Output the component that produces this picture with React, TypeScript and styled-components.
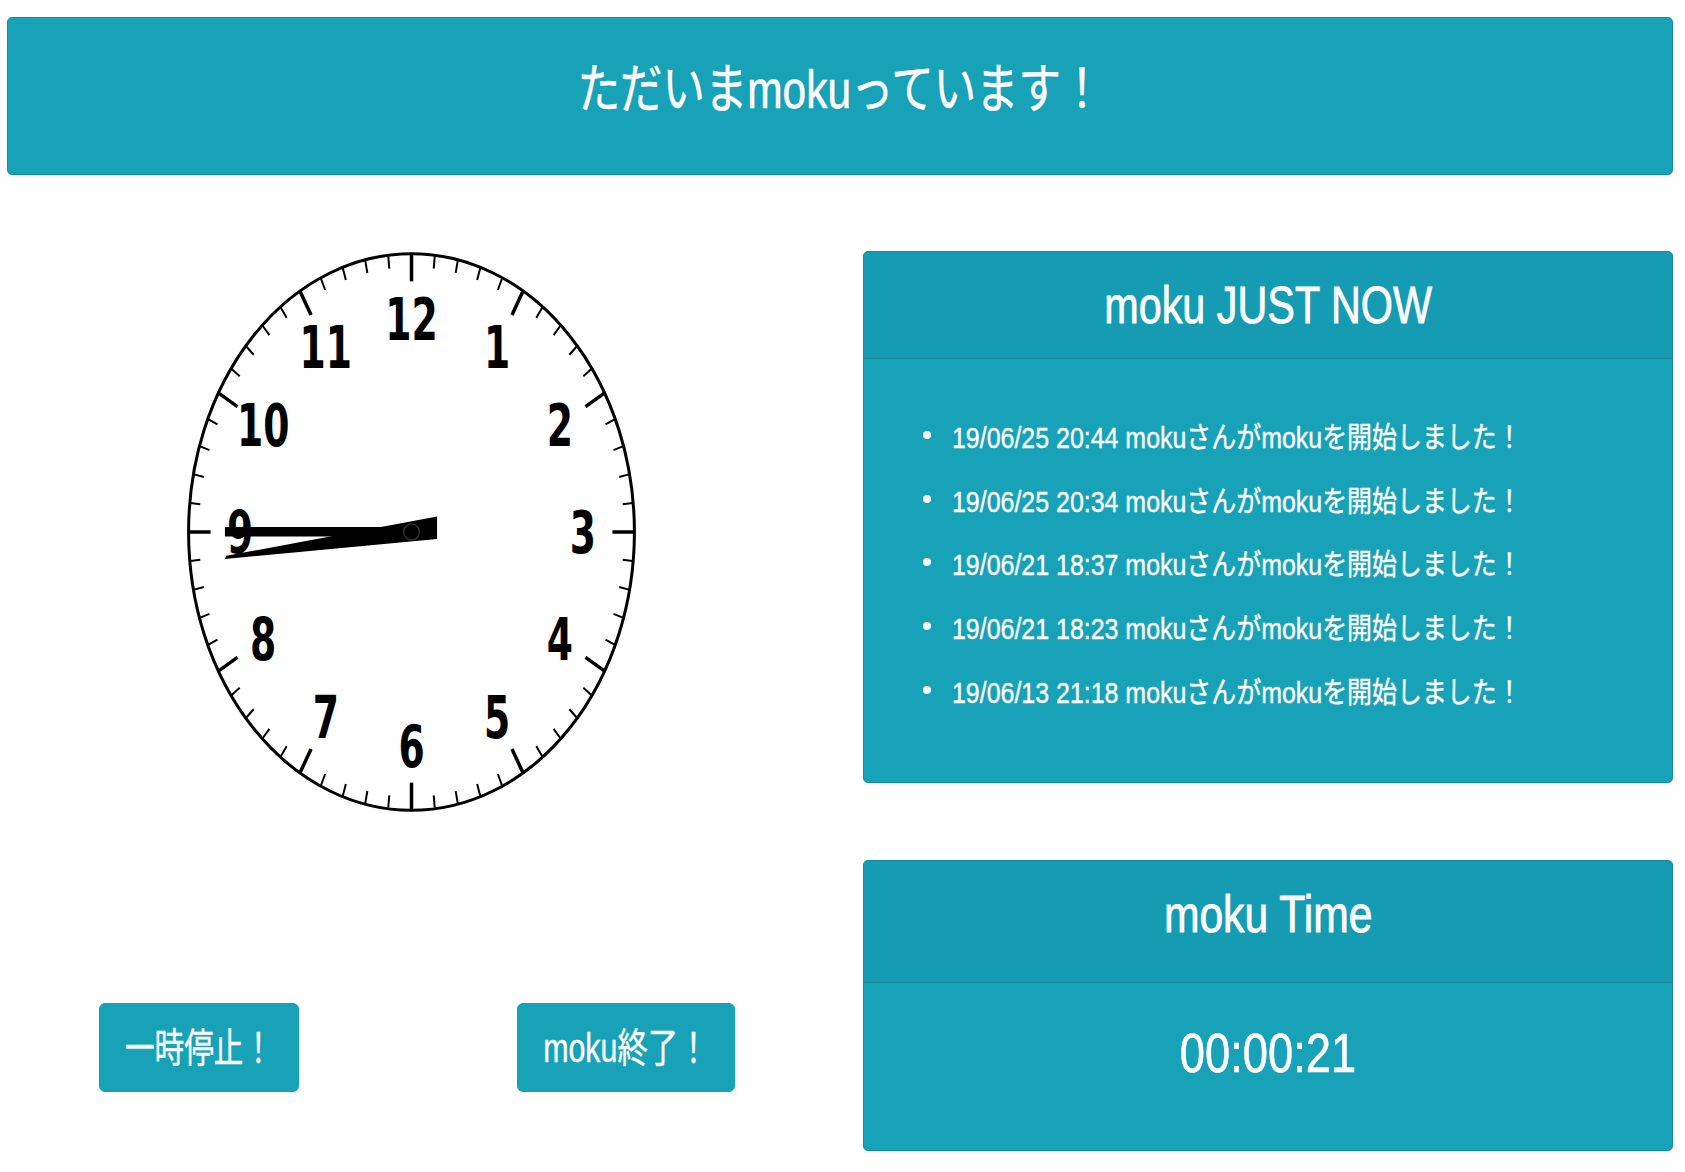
import React from "react";
import styled, { createGlobalStyle } from "styled-components";

const TEAL = "#17a2b8";
const EDGE = "#148c9f";

const GlobalStyle = createGlobalStyle`
  html, body { margin: 0; padding: 0; background: #ffffff; }
  body { font-family: "Liberation Sans", "Noto Sans CJK JP", sans-serif; }
`;

const Page = styled.div`
  box-sizing: border-box;
  width: 1685px;
  padding: 17px 12px 20px 7px;
`;

const TopBar = styled.header`
  box-sizing: border-box;
  height: 158px;
  background: ${TEAL};
  border: 1px solid ${EDGE};
  border-radius: 5px;
  display: flex;
  align-items: center;
  justify-content: center;
  padding-bottom: 14px;
`;

const Squish = styled.span<{ $sx: number; $origin?: string; $weight?: number }>`
  display: inline-block;
  white-space: nowrap;
  transform: scaleX(${(p) => p.$sx});
  transform-origin: ${(p) => p.$origin ?? "center"};
  -webkit-text-stroke: ${(p) => p.$weight ?? 0}px currentColor;
`;

const PageTitle = styled.h1`
  margin: 0;
  color: #ffffff;
  font-weight: 400;
  font-size: 53px;
  line-height: 1;
`;

const Main = styled.main`
  display: grid;
  grid-template-columns: 809px 810px;
  column-gap: 47px;
  margin-top: 76px;
`;

const LeftColumn = styled.section`
  display: flex;
  flex-direction: column;
`;

const ClockFace = styled.svg`
  display: block;
  width: 449px;
  height: 560px;
  margin: 1px 0 0 180px;
`;

const ButtonRow = styled.div`
  display: flex;
  gap: 218px;
  margin-top: 191px;
  padding-left: 92px;
`;

const ActionButton = styled.button<{ $w: number }>`
  box-sizing: border-box;
  width: ${(p) => p.$w}px;
  height: 89px;
  border: 1px solid ${TEAL};
  border-radius: 6px;
  background: ${TEAL};
  color: #ffffff;
  font-family: "Liberation Sans", "Noto Sans CJK JP", sans-serif;
  font-size: 40px;
  line-height: 1;
  padding: 0;
  display: flex;
  align-items: center;
  justify-content: center;
  cursor: pointer;
`;

const RightColumn = styled.section`
  display: flex;
  flex-direction: column;
  gap: 77px;
`;

const Card = styled.div<{ $h: number }>`
  box-sizing: border-box;
  height: ${(p) => p.$h}px;
  background: ${TEAL};
  border: 1px solid ${EDGE};
  border-radius: 5px;
  overflow: hidden;
  display: flex;
  flex-direction: column;
  color: #ffffff;
`;

const CardHeader = styled.div<{ $h: number; $shift: number }>`
  box-sizing: border-box;
  height: ${(p) => p.$h + 1}px;
  flex: none;
  background: rgba(0, 0, 0, 0.03);
  border-bottom: 1px solid rgba(0, 0, 0, 0.125);
  display: flex;
  align-items: center;
  justify-content: center;
  padding-bottom: ${(p) => p.$shift}px;
`;

const CardTitle = styled.h2`
  margin: 0;
  font-weight: 400;
  font-size: 52px;
  line-height: 1;
`;

const FeedList = styled.ul`
  list-style: none;
  margin: 0;
  padding: 44px 0 0 59px;
`;

const FeedItem = styled.li`
  display: flex;
  align-items: center;
  height: 63.75px;
  font-size: 29px;
`;

const Bullet = styled.span`
  flex: none;
  width: 8px;
  height: 8px;
  border-radius: 50%;
  background: #ffffff;
  margin-right: 21px;
`;

const TimerBody = styled.div`
  flex: 1;
  display: flex;
  align-items: center;
  justify-content: center;
  padding-bottom: 28px;
`;

const TimerText = styled.div`
  font-size: 56px;
  line-height: 1;
`;

const feed = [
  "19/06/25 20:44 mokuさんがmokuを開始しました！",
  "19/06/25 20:34 mokuさんがmokuを開始しました！",
  "19/06/21 18:37 mokuさんがmokuを開始しました！",
  "19/06/21 18:23 mokuさんがmokuを開始しました！",
  "19/06/13 21:18 mokuさんがmokuを開始しました！",
];

function Clock() {
  const ticks = Array.from({ length: 60 }, (_, i) => {
    const a = (i * 6 * Math.PI) / 180;
    const major = i % 5 === 0;
    const r1 = 99;
    const r2 = major ? 89.5 : 94.6;
    return (
      <line
        key={i}
        x1={100 + r1 * Math.sin(a)}
        y1={100 - r1 * Math.cos(a)}
        x2={100 + r2 * Math.sin(a)}
        y2={100 - r2 * Math.cos(a)}
        stroke="#000"
        strokeWidth={major ? 3.5 : 2}
        vectorEffect="non-scaling-stroke"
      />
    );
  });
  const numbers = Array.from({ length: 12 }, (_, i) => {
    const n = i + 1;
    const a = (n * 30 * Math.PI) / 180;
    const x = 100 + 76.3 * Math.sin(a);
    const y = 100 - 76.3 * Math.cos(a);
    return (
      <text
        key={n}
        transform={`translate(${x} ${y}) scale(0.8 1)`}
        y={7.6}
        textAnchor="middle"
        fontFamily="'DejaVu Sans', sans-serif"
        fontWeight={700}
        fontSize={21}
        fill="#000"
      >
        {n}
      </text>
    );
  });
  return (
    <ClockFace viewBox="0 0 200 200" preserveAspectRatio="none">
      <ellipse cx={100} cy={100} rx={99.3} ry={99.4} fill="#fff" stroke="#000" strokeWidth={3} vectorEffect="non-scaling-stroke" />
      {ticks}
      {numbers}
      <polygon points="16.9,98.2 104,98.2 104,101.6 16.9,101.6" fill="#000" />
      <polygon points="16.9,109.6 17.5,108.5 111.4,94.5 111.4,102.5" fill="#000" />
      <ellipse cx={100} cy={100} rx={3.5} ry={2.9} fill="none" stroke="#3a3a3a" strokeWidth={1.2} vectorEffect="non-scaling-stroke" />
    </ClockFace>
  );
}

export default function App() {
  return (
    <>
      <GlobalStyle />
      <Page>
        <TopBar>
          <PageTitle>
            <Squish $sx={0.8} $weight={0.6}>ただいまmokuっています！</Squish>
          </PageTitle>
        </TopBar>
        <Main>
          <LeftColumn>
            <Clock />
            <ButtonRow>
              <ActionButton $w={200}>
                <Squish $sx={0.74} $weight={0.4}>一時停止！</Squish>
              </ActionButton>
              <ActionButton $w={218}>
                <Squish $sx={0.76} $weight={0.4}>moku終了！</Squish>
              </ActionButton>
            </ButtonRow>
          </LeftColumn>
          <RightColumn>
            <Card $h={532}>
              <CardHeader $h={106} $shift={0}>
                <CardTitle>
                  <Squish $sx={0.795} $weight={0.8}>moku JUST NOW</Squish>
                </CardTitle>
              </CardHeader>
              <FeedList>
                {feed.map((t) => (
                  <FeedItem key={t}>
                    <Bullet />
                    <Squish $sx={0.86} $origin="left center" $weight={0.4}>{t}</Squish>
                  </FeedItem>
                ))}
              </FeedList>
            </Card>
            <Card $h={291}>
              <CardHeader $h={121} $shift={15}>
                <CardTitle>
                  <Squish $sx={0.82} $weight={0.8}>moku Time</Squish>
                </CardTitle>
              </CardHeader>
              <TimerBody>
                <TimerText>
                  <Squish $sx={0.81} $weight={0.6}>00:00:21</Squish>
                </TimerText>
              </TimerBody>
            </Card>
          </RightColumn>
        </Main>
      </Page>
    </>
  );
}
